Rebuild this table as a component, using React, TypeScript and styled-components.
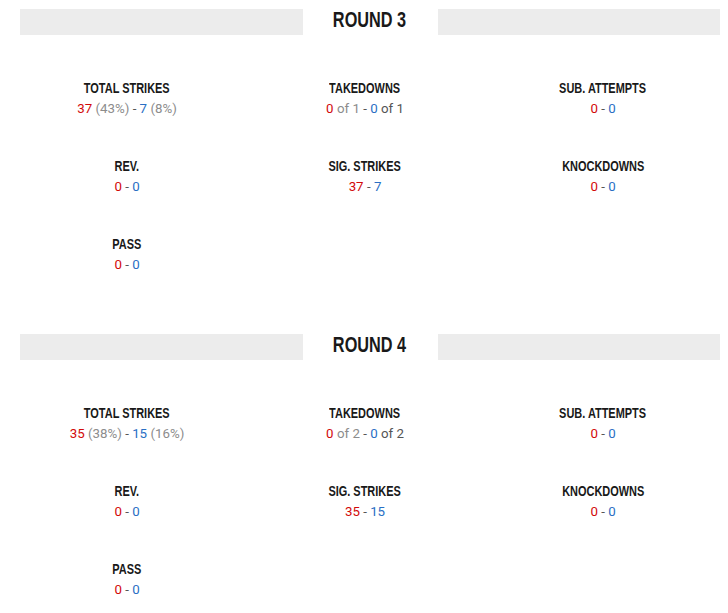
import React from "react";
import styled, { createGlobalStyle } from "styled-components";

const Global = createGlobalStyle`
  html, body { margin: 0; padding: 0; background: #fff; overflow-x: hidden; }
  body { font-family: Roboto, "Liberation Sans", sans-serif; }
`;

const Page = styled.div`
  padding: 9px 0 0 8px;
  width: 720px;
`;

const Round = styled.section`
  margin-bottom: 59px;
`;

const Header = styled.div`
  display: flex;
  align-items: center;
  height: 26px;
  margin: 0 0 0 12px;
  width: 700px;
`;

const Bar = styled.div`
  flex: 1;
  height: 26px;
  background: #ececec;
`;

const Title = styled.h2`
  margin: -4px 0 0;
  width: 135px;
  text-align: center;
  font-family: "Liberation Sans", Arial, sans-serif;
  font-weight: 700;
  font-size: 22px;
  line-height: 26px;
  color: #191919;
`;

const Narrow = styled.span<{ $scale: number }>`
  display: inline-block;
  white-space: nowrap;
  transform: scaleX(${(p) => p.$scale});
  transform-origin: center;
`;

const Grid = styled.div`
  display: grid;
  grid-template-columns: repeat(3, 238px);
  row-gap: 36px;
  margin-top: 42px;
`;

const Cell = styled.div`
  display: flex;
  flex-direction: column;
  align-items: center;
  height: 42px;
`;

const Label = styled.div`
  font-family: "Liberation Sans", Arial, sans-serif;
  font-weight: 700;
  font-size: 15px;
  line-height: 21px;
  color: #191919;
`;

const Value = styled.div`
  margin-top: 1px;
  font-family: Roboto, sans-serif;
  font-size: 13.3px;
  line-height: 20px;
  color: #555;
`;

const Tone = styled.span<{ $tone: "red" | "blue" | "gray" }>`
  color: ${(p) =>
    p.$tone === "red" ? "#d20a0a" : p.$tone === "blue" ? "#2a6fc4" : "#8c8c8c"};
`;

type Part = [string, "red" | "blue" | "gray" | "dark"];
type Stat = { label: string; parts: Part[] };

const Stat: React.FC<{ stat: Stat }> = ({ stat }) => (
  <Cell>
    <Label>
      <Narrow $scale={0.73}>{stat.label}</Narrow>
    </Label>
    <Value>
      {stat.parts.map(([t, tone], i) =>
        tone === "dark" ? (
          <React.Fragment key={i}>{t}</React.Fragment>
        ) : (
          <Tone key={i} $tone={tone}>
            {t}
          </Tone>
        )
      )}
    </Value>
  </Cell>
);

const zero = (): Part[] => [
  ["0", "red"],
  [" - ", "dark"],
  ["0", "blue"],
];

const rounds: { title: string; stats: Stat[] }[] = [
  {
    title: "ROUND 3",
    stats: [
      {
        label: "TOTAL STRIKES",
        parts: [
          ["37", "red"],
          [" (43%)", "gray"],
          [" - ", "dark"],
          ["7", "blue"],
          [" (8%)", "gray"],
        ],
      },
      {
        label: "TAKEDOWNS",
        parts: [
          ["0", "red"],
          [" of 1", "gray"],
          [" - ", "dark"],
          ["0", "blue"],
          [" of 1", "dark"],
        ],
      },
      { label: "SUB. ATTEMPTS", parts: zero() },
      { label: "REV.", parts: zero() },
      {
        label: "SIG. STRIKES",
        parts: [
          ["37", "red"],
          [" - ", "dark"],
          ["7", "blue"],
        ],
      },
      { label: "KNOCKDOWNS", parts: zero() },
      { label: "PASS", parts: zero() },
    ],
  },
  {
    title: "ROUND 4",
    stats: [
      {
        label: "TOTAL STRIKES",
        parts: [
          ["35", "red"],
          [" (38%)", "gray"],
          [" - ", "dark"],
          ["15", "blue"],
          [" (16%)", "gray"],
        ],
      },
      {
        label: "TAKEDOWNS",
        parts: [
          ["0", "red"],
          [" of 2", "gray"],
          [" - ", "dark"],
          ["0", "blue"],
          [" of 2", "dark"],
        ],
      },
      { label: "SUB. ATTEMPTS", parts: zero() },
      { label: "REV.", parts: zero() },
      {
        label: "SIG. STRIKES",
        parts: [
          ["35", "red"],
          [" - ", "dark"],
          ["15", "blue"],
        ],
      },
      { label: "KNOCKDOWNS", parts: zero() },
      { label: "PASS", parts: zero() },
    ],
  },
];

export default function App() {
  return (
    <>
      <Global />
      <Page>
        {rounds.map((r) => (
          <Round key={r.title}>
            <Header>
              <Bar />
              <Title>
                <Narrow $scale={0.74}>{r.title}</Narrow>
              </Title>
              <Bar />
            </Header>
            <Grid>
              {r.stats.map((s) => (
                <Stat key={s.label} stat={s} />
              ))}
            </Grid>
          </Round>
        ))}
      </Page>
    </>
  );
}
